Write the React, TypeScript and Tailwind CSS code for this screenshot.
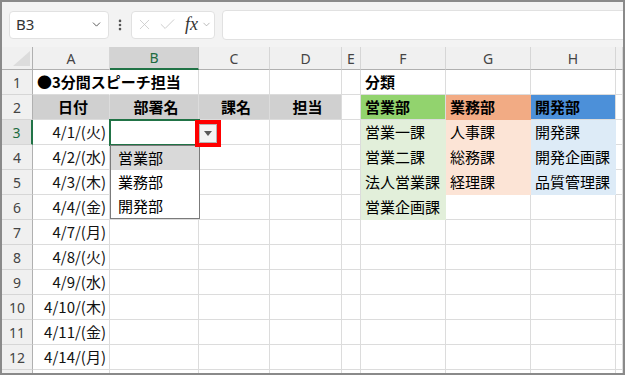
import { ChevronDown, X, Check, EllipsisVertical } from "lucide-react";

const GRID = "grid grid-cols-[31px_77px_89px_71px_72px_19px_85px_85px_85px_1fr]";
const COL_LETTERS = ["A", "B", "C", "D", "E", "F", "G", "H", ""];

type Cell = { text?: string; cls?: string };

const GRAY = "bg-[#d0d0d0] border-[#d0d0d0] font-bold justify-center";
const LG = "bg-[#e2efda] border-[#e2efda]";
const LS = "bg-[#fce4d6] border-[#fce4d6]";
const LB = "bg-[#ddebf7] border-[#ddebf7]";

const DATES = ["4/1/(火)", "4/2/(水)", "4/3/(木)", "4/4/(金)", "4/7/(月)", "4/8/(火)", "4/9/(水)", "4/10/(木)", "4/11/(金)", "4/14/(月)"];
const SALES = ["営業一課", "営業二課", "法人営業課", "営業企画課"];
const ADMIN = ["人事課", "総務課", "経理課"];
const DEV = ["開発課", "開発企画課", "品質管理課"];

function buildRows(): Cell[][] {
    const rows: Cell[][] = [];
    rows.push([
        { text: "●3分間スピーチ担当", cls: "font-bold border-r-white z-10 overflow-visible" },
        {}, {}, {}, {},
        { text: "分類", cls: "font-bold" },
        {}, {}, {},
    ]);
    rows.push([
        { text: "日付", cls: GRAY },
        { text: "部署名", cls: GRAY },
        { text: "課名", cls: GRAY },
        { text: "担当", cls: GRAY },
        {},
        { text: "営業部", cls: "bg-[#92d36e] border-[#92d36e] font-bold" },
        { text: "業務部", cls: "bg-[#f2ab84] border-[#f2ab84] font-bold" },
        { text: "開発部", cls: "bg-[#4c90d9] border-[#4c90d9] font-bold" },
        {},
    ]);
    DATES.forEach((d, i) => {
        rows.push([
            { text: d, cls: "justify-end pr-[3px] text-[#111]" },
            {}, {}, {}, {},
            i < SALES.length ? { text: SALES[i], cls: LG } : {},
            i < ADMIN.length ? { text: ADMIN[i], cls: LS } : {},
            i < DEV.length ? { text: DEV[i], cls: LB } : {},
            {},
        ]);
    });
    return rows;
}

function FormulaBar() {
    return (
        <div className="flex h-[45px] items-center bg-[#f3f3f3] pl-[7px] font-['Noto_Sans',sans-serif]">
            <div className="flex h-[28px] w-[100px] items-center justify-between rounded-[4px] border border-[#e1e1e1] bg-white pl-[6px] pr-[5px]">
                <span className="text-[15px] text-[#333]">B3</span>
                <ChevronDown size={13} strokeWidth={1.6} className="text-[#444]" />
            </div>
            <div className="flex w-[22px] justify-center">
                <EllipsisVertical size={14} strokeWidth={2.5} className="text-[#555]" />
            </div>
            <div className="flex h-[28px] w-[84px] items-center rounded-[4px] border border-[#e1e1e1] bg-white pl-[4px]">
                <X size={17} strokeWidth={1.1} className="text-[#c6c6c6]" />
                <Check size={19} strokeWidth={1.1} className="ml-[5px] text-[#c6c6c6]" />
                <span className="ml-[8px] font-['Liberation_Serif',serif] text-[18px] italic text-[#333]">fx</span>
                <ChevronDown size={11} strokeWidth={1.5} className="ml-[3px] text-[#9a9a9a]" />
            </div>
            <div className="ml-[7px] -mr-2 h-[30px] flex-1 rounded-[4px] border border-[#e1e1e1] bg-white" />
        </div>
    );
}

export default function App() {
    const rows = buildRows();
    return (
        <div className="h-[375px] w-[625px] overflow-hidden border-2 border-[#8a8a8a] bg-white font-['Noto_Sans_CJK_JP',sans-serif] text-black">
            <FormulaBar />
            <div className="relative">
                {/* column headers */}
                <div className={`${GRID} h-[23px] font-['Noto_Sans',sans-serif] text-[14px] text-[#444]`}>
                    <div className="relative border-b border-r border-[#b0b0b0] bg-[#f0f0f0]">
                        <svg className="absolute bottom-[3px] right-[2px]" width="17" height="15" viewBox="0 0 17 15">
                            <polygon points="17,0 17,15 0,15" fill="#dcdcdc" />
                        </svg>
                    </div>
                    {COL_LETTERS.map((c, i) =>
                        c === "B" ? (
                            <div key={i} className="flex items-center justify-center border-b-2 border-r border-b-[#217346] border-r-[#c8c8c8] bg-[#d3d3d3] text-[#1d6b40]">
                                {c}
                            </div>
                        ) : (
                            <div key={i} className="flex items-center justify-center border-b border-r border-b-[#b0b0b0] border-r-[#d6d6d6] bg-[#f0f0f0]">
                                {c}
                            </div>
                        )
                    )}
                </div>

                {/* rows */}
                {rows.map((row, r) => (
                    <div key={r} className={`${GRID} h-[25px] text-[15px]`}>
                        <div
                            className={
                                r === 2
                                    ? "flex items-center justify-center border-b border-r-2 border-b-[#d6d6d6] border-r-[#217346] bg-[#e2e2e2] font-['Noto_Sans',sans-serif] text-[14px] text-[#1d6b40]"
                                    : "flex items-center justify-center border-b border-r border-b-[#d6d6d6] border-r-[#b0b0b0] bg-[#f0f0f0] font-['Noto_Sans',sans-serif] text-[14px] text-[#444]"
                            }
                        >
                            {r + 1}
                        </div>
                        {row.map((cell, c) => (
                            <div
                                key={c}
                                className={`flex items-center whitespace-nowrap border-b border-r border-[#dcdcdc] pl-[4px] ${cell.cls ?? ""}`}
                            >
                                {cell.text}
                            </div>
                        ))}
                    </div>
                ))}
                {/* partly visible next row */}
                <div className={`${GRID} h-[25px]`}>
                    <div className="border-r border-r-[#b0b0b0] bg-[#f0f0f0]" />
                    {COL_LETTERS.map((_, i) => (
                        <div key={i} className="border-r border-[#dcdcdc]" />
                    ))}
                </div>

                {/* active cell B3 */}
                <div className="absolute left-[107px] top-[72px] h-[27px] w-[91px] border-2 border-[#217346]" />

                {/* validation dropdown list */}
                <div className="absolute left-[108px] top-[98px] w-[90px] border border-[#7b7b7b] bg-white text-[15px]">
                    <div className="flex h-[24px] items-center bg-[#d9d9d9] pl-[7px]">営業部</div>
                    <div className="flex h-[24px] items-center pl-[7px]">業務部</div>
                    <div className="flex h-[24px] items-center pl-[7px]">開発部</div>
                </div>

                {/* dropdown button with red highlight */}
                <div className="absolute left-[193px] top-[73px] h-[27px] w-[26px] border-4 border-[#ff0000] bg-white">
                    <div className="flex h-full w-full items-center justify-center border border-[#b5b5b5] bg-[#f4f4f4]">
                        <svg width="8" height="5" viewBox="0 0 8 5">
                            <polygon points="0,0 8,0 4,5" fill="#5a5a5a" />
                        </svg>
                    </div>
                </div>
            </div>
        </div>
    );
}
